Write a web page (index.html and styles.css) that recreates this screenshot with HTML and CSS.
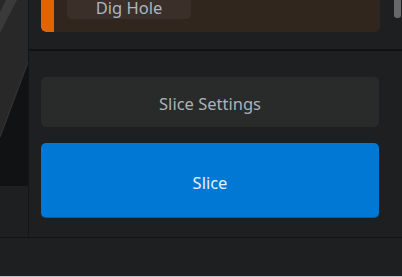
FILE: index.html
```html
<!DOCTYPE html>
<html lang="en">
<head>
  <meta charset="UTF-8" />
  <meta name="viewport" content="width=device-width, initial-scale=1.0"/>
  <title>Slicer</title>
  <link rel="stylesheet" href="styles.css">
</head>
<body>
  <div class="app">
    <div class="main">
      <div class="viewport-col">
        <div class="viewport">
          <svg width="28" height="186" viewBox="0 0 28 186">
            <rect width="28" height="186" fill="#282829"/>
            <polygon points="6,0 17,0 0,33 0,12" fill="#3a3a3b"/>
            <polygon points="28,62 28,186 0,186 0,137" fill="#111213"/>
            <line x1="28" y1="62" x2="0" y2="137" stroke="#333334" stroke-width="1.2"/>
          </svg>
        </div>
        <div class="viewport-foot"></div>
      </div>
      <div class="side">
        <div class="scroll-area">
          <div class="card">
            <div class="card-accent"></div>
            <div class="card-body">
              <button class="card-btn">Dig Hole</button>
            </div>
          </div>
          <div class="scrollbar"></div>
        </div>
        <div class="actions">
          <button class="btn btn-settings">Slice Settings</button>
          <button class="btn btn-slice">Slice</button>
        </div>
      </div>
    </div>
    <div class="status"></div>
  </div>
</body>
</html>
```

FILE: styles.css
```css
* {
  margin: 0;
  padding: 0;
  box-sizing: border-box;
  font-family: "Noto Sans", "Open Sans", sans-serif;
}

body {
  background: #1e1f21;
  width: 402px;
  height: 277px;
  overflow: hidden;
}

.app {
  display: flex;
  flex-direction: column;
  height: 277px;
}

.main {
  display: flex;
  height: 237px;
}

.viewport-col {
  width: 29px;
  display: flex;
  flex-direction: column;
  border-right: 1px solid #141517;
}

.viewport {
  height: 186px;
  line-height: 0;
}

.viewport-foot {
  flex: 1;
  background: #1e1f21;
}

.side {
  flex: 1;
  display: flex;
  flex-direction: column;
  background: #1e1f21;
}

.scroll-area {
  position: relative;
  height: 51px;
  padding: 0 22px 17px 12px;
  border-bottom: 2px solid #111214;
  display: flex;
  flex-direction: column;
  justify-content: flex-end;
  overflow: hidden;
}

.card {
  display: flex;
  height: 40px;
  background: #30261d;
  border-radius: 0 0 5px 5px;
  overflow: hidden;
}

.card-accent {
  width: 13px;
  background: #e06500;
  border-radius: 0 0 0 5px;
}

.card-body {
  flex: 1;
  display: flex;
  align-items: flex-end;
  padding: 0 0 13px 13px;
}

.card-btn {
  width: 124px;
  height: 34px;
  border: none;
  border-radius: 5px;
  background: #3a3029;
  color: #a9b6c4;
  font-size: 16.5px;
  padding-top: 10px;
}

.scrollbar {
  position: absolute;
  top: 0;
  right: 1px;
  width: 7px;
  height: 18px;
  background: #66686a;
  border-radius: 0 0 3px 3px;
}

.actions {
  flex: 1;
  display: flex;
  flex-direction: column;
  gap: 16px;
  padding: 26px 23px 0 12px;
}

.btn {
  width: 100%;
  border: none;
  border-radius: 5px;
  font-size: 16.5px;
}

.btn-settings {
  height: 50px;
  background: #292a2a;
  color: #a9b3bb;
  padding-top: 2px;
}

.btn-slice {
  height: 75px;
  background: #0078d4;
  border-bottom: 1px solid #0a5a99;
  color: #e8f1fb;
  padding-top: 4px;
}

.status {
  flex: 1;
  background: #1e1f21;
  border-top: 1px solid #121314;
  border-bottom: 1px solid #c3c6c9;
}
```
